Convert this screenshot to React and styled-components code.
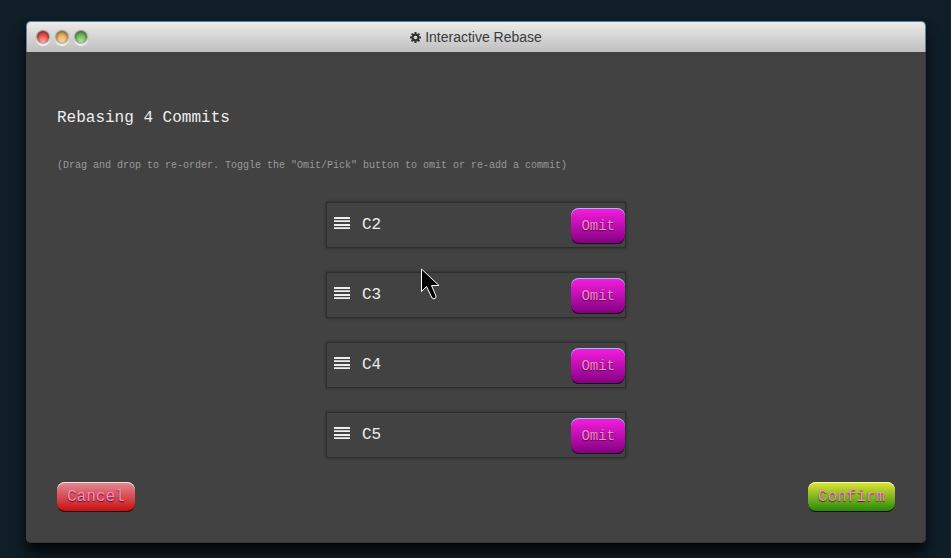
import React from "react";
import styled, { createGlobalStyle } from "styled-components";

const GlobalStyle = createGlobalStyle`
  * { box-sizing: border-box; }
  body {
    margin: 0;
    background: #101e28;
    color: #eee;
    font-family: "Courier New", "Liberation Mono", monospace;
    font-size: 16px;
    line-height: 20px;
  }
`;

const Desktop = styled.main`
  position: relative;
  min-height: 100vh;
  padding: 21px 25px 16px 26px;
  display: flex;
`;

const Window = styled.section`
  flex: 1;
  display: flex;
  flex-direction: column;
  border-radius: 5px;
  background: #424242;
  box-shadow: 0 10px 14px -2px rgba(0, 0, 0, 0.7), 0 8px 12px rgba(0, 0, 0, 0.35);
`;

const TitleBar = styled.header`
  height: 31px;
  display: grid;
  grid-template-columns: 1fr auto 1fr;
  align-items: center;
  padding: 0 10px;
  border: 1px solid #5f819b;
  border-bottom: 0;
  border-radius: 5px 5px 0 0;
  background: linear-gradient(#ebebeb, #bfbfbf);
`;

const Lights = styled.div`
  display: flex;
  gap: 7px;
`;

const Light = styled.button`
  width: 12px;
  height: 12px;
  padding: 0;
  border: 0;
  border-radius: 50%;
  background: radial-gradient(circle at 50% 100%, ${(p) => p.$glow}, ${(p) => p.$color} 60%);
  box-shadow: 0 0 1px 1px rgba(0, 0, 0, 0.3), 0 2px 0 1px #f3f3f3,
    inset 0 1px 3px rgba(0, 0, 0, 0.6);
`;

const Title = styled.h1`
  display: flex;
  align-items: center;
  gap: 4px;
  margin: 0;
  color: #3b3b3b;
  font: 14px/20px "Liberation Sans", Arial, sans-serif;
`;

const Content = styled.div`
  flex: 1;
  display: flex;
  flex-direction: column;
  padding: 56px 30px 30px 31px;
  border: solid #353535;
  border-width: 0 1px 1px 0;
  border-radius: 0 0 5px 5px;
`;

const Heading = styled.h2`
  margin: 0;
  font-size: 16px;
  font-weight: 400;
  line-height: 20px;
`;

const Hint = styled.p`
  margin: 30px 0 0;
  color: #999;
  font-size: 10px;
  line-height: 16px;
`;

const CommitList = styled.ul`
  display: flex;
  flex-direction: column;
  gap: 24px;
  width: 300px;
  margin: 28px auto 24px;
  padding: 0;
  list-style: none;
`;

const Commit = styled.li`
  height: 46px;
  display: flex;
  align-items: center;
  border: 1px solid #2e2e2e;
  box-shadow: 0 0 3px rgba(0, 0, 0, 0.4);
  padding-left: 7px;
  cursor: move;
`;

const CommitName = styled.span`
  flex: 1;
  padding-left: 12px;
`;

const Button = styled.button`
  padding: 0 10px;
  height: 30px;
  border: 0;
  border-radius: 8px;
  color: #ff87c8;
  font-family: inherit;
  font-size: 16px;
  line-height: 20px;
  text-shadow: 0 1px 1px rgba(0, 0, 0, 0.65);
  background: linear-gradient(${(p) => p.$from}, ${(p) => p.$to});
  box-shadow: inset 0 1px 0 ${(p) => p.$edge}, inset 0 -1px 0 #090909;
`;

const OmitButton = styled(Button)`
  align-self: flex-end;
  height: 36px;
  margin-bottom: 3px;
  font-size: 14px;
`;

const Actions = styled.footer`
  display: flex;
  justify-content: space-between;
  margin-top: auto;
`;

const Cursor = styled.svg`
  position: absolute;
  left: 421px;
  top: 268px;
  pointer-events: none;
`;

const GearIcon = () => (
  <svg width="11" height="11" viewBox="0 0 11 11" aria-hidden="true">
    <g fill="#333">
      <rect x="4.5" width="2" height="11" />
      <rect x="4.5" width="2" height="11" transform="rotate(45 5.5 5.5)" />
      <rect x="4.5" width="2" height="11" transform="rotate(90 5.5 5.5)" />
      <rect x="4.5" width="2" height="11" transform="rotate(135 5.5 5.5)" />
      <circle cx="5.5" cy="5.5" r="3.9" />
    </g>
    <circle cx="5.5" cy="5.5" r="1.8" fill="#d8d8d8" />
  </svg>
);

const GripIcon = () => (
  <svg width="16" height="16" viewBox="0 0 16 16" fill="#eee" aria-hidden="true">
    <path d="M0 0h16v2H0zM0 3.300h16v1.800H0zM0 7h16v2H0zM0 10.300h16v1.800H0z" />
  </svg>
);

const lights = [
  { name: "Close", color: "#ec4a4a", glow: "#ffc0b8" },
  { name: "Minimize", color: "#e7ad5c", glow: "#ffe2ad" },
  { name: "Zoom", color: "#6fb558", glow: "#c4ecae" },
];

const commits = ["C2", "C3", "C4", "C5"];

export default function App() {
  return (
    <>
      <GlobalStyle />
      <Desktop>
        <Window>
          <TitleBar>
            <Lights>
              {lights.map((l) => (
                <Light key={l.name} type="button" aria-label={l.name} $color={l.color} $glow={l.glow} />
              ))}
            </Lights>
            <Title>
              <GearIcon />
              Interactive Rebase
            </Title>
          </TitleBar>
          <Content>
            <Heading>Rebasing 4 Commits</Heading>
            <Hint>
              (Drag and drop to re-order. Toggle the "Omit/Pick" button to omit or re-add a commit)
            </Hint>
            <CommitList>
              {commits.map((name) => (
                <Commit key={name}>
                  <GripIcon />
                  <CommitName>{name}</CommitName>
                  <OmitButton type="button" $from="#f81de0" $to="#80007f" $edge="#91c4ed">
                    Omit
                  </OmitButton>
                </Commit>
              ))}
            </CommitList>
            <Actions>
              <Button type="button" $from="#e38b94" $to="#c90c0c" $edge="#f5e0e2">
                Cancel
              </Button>
              <Button type="button" $from="#e0e632" $to="#21860b" $edge="#f4f7bb">
                Confirm
              </Button>
            </Actions>
          </Content>
        </Window>
        <Cursor width="20" height="32" viewBox="0 0 20 32" aria-hidden="true">
          <path
            d="M.5 1v22.500l5-5 5.500 11.500 2 1 2-1.500v-1.500L10.500 17.500h7.500z"
            fill="#000"
            stroke="#fff"
            strokeWidth="1"
          />
        </Cursor>
      </Desktop>
    </>
  );
}
